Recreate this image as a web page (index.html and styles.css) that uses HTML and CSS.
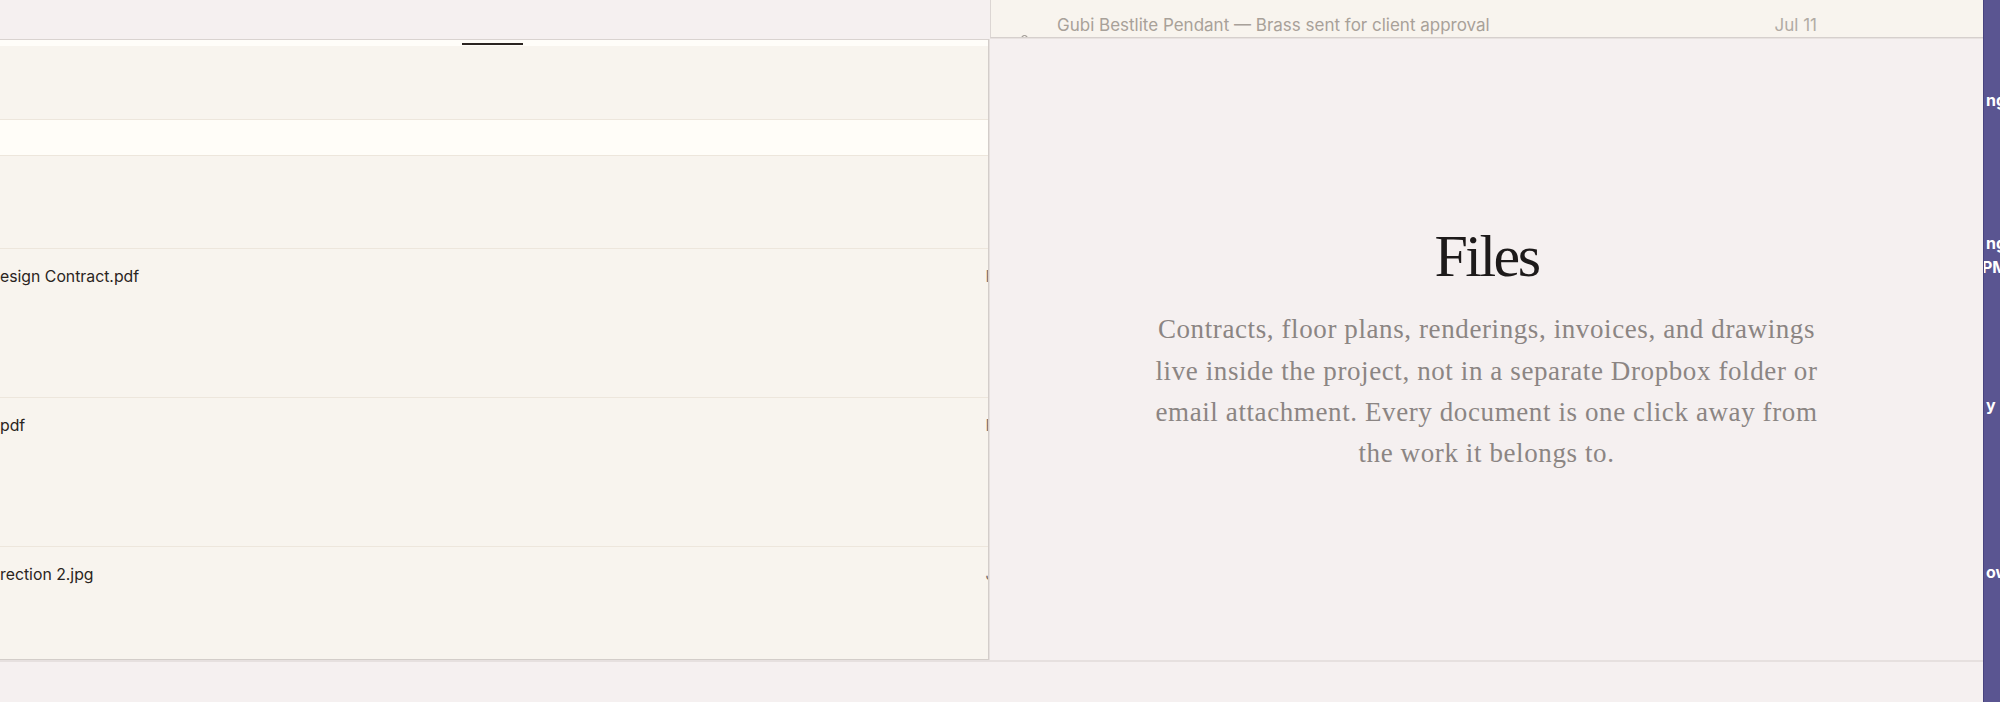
FILE: index.html
```html
<!DOCTYPE html>
<html lang="en">
<head>
<meta charset="utf-8">
<title>Project Files</title>
<link rel="stylesheet" href="styles.css">
</head>
<body>
<div class="screen">
  <main class="workspace">
    <section class="files-col">
      <div class="files-card">
        <div class="tabbar"><span class="tab-indicator"></span></div>
        <div class="toolbar"></div>
        <div class="search-row"></div>
        <div class="list-head"></div>
        <div class="file-row"><span class="file-name">esign Contract.pdf</span><span class="file-type">PDF</span></div>
        <div class="file-row"><span class="file-name">pdf</span><span class="file-type">PDF</span></div>
        <div class="file-row"><span class="file-name">rection 2.jpg</span><span class="file-type">JPG</span></div>
      </div>
    </section>
    <section class="detail-col">
      <div class="activity-card">
        <div class="activity-row">
          <span class="activity-icon"></span>
          <span class="activity-text">Gubi Bestlite Pendant — Brass sent for client approval</span>
          <span class="activity-date">Jul 11</span>
        </div>
      </div>
      <div class="empty-state">
        <h1 class="empty-title">Files</h1>
        <p class="empty-copy">Contracts, floor plans, renderings, invoices, and drawings live inside the project, not in a separate Dropbox folder or email attachment. Every document is one click away from the work it belongs to.</p>
      </div>
    </section>
  </main>
  <aside class="rail">
    <span class="rail-line l1">ngs</span>
    <span class="rail-line l2">ng</span>
    <span class="rail-line l3">PM</span>
    <span class="rail-line l4">y</span>
    <span class="rail-line l5">ow</span>
  </aside>
</div>
</body>
</html>
```
FILE: styles.css
```css
* { box-sizing: border-box; }

html, body {
  margin: 0;
  padding: 0;
}

body {
  width: 2000px;
  height: 702px;
  overflow: hidden;
  background: #f5f0f0;
  font-family: Inter, "Liberation Sans", sans-serif;
}

.screen {
  display: flex;
  height: 702px;
}

.workspace {
  flex: 0 0 1983px;
  height: 662px;
  display: grid;
  grid-template-columns: 990px 1fr;
  border-bottom: 2px solid #e6e0df;
}

/* ---------- left: file list ---------- */
.files-col {
  padding-top: 39px;
  min-height: 0;
}

.files-card {
  width: 989px;
  height: 100%;
  background: #f8f4ee;
  border-top: 1px solid #d9d3d0;
  border-right: 1px solid #d3cdca;
  border-bottom: 1px solid #d3cdc9;
  box-shadow: 1px 0 0 #e6e0de;
  overflow: hidden;
  display: flex;
  flex-direction: column;
}

.tabbar {
  flex: 0 0 6px;
  background: #fffdf9;
  padding-top: 3px;
  display: flex;
}

.tab-indicator {
  margin-left: 462px;
  width: 61px;
  height: 2px;
  background: #2b2421;
}

.toolbar {
  flex: 0 0 74px;
  border-bottom: 1px solid #ede6dc;
}

.search-row {
  flex: 0 0 36px;
  background: #fffdf8;
  border-bottom: 1px solid #ede6dc;
}

.list-head {
  flex: 0 0 93px;
  border-bottom: 1px solid #ede6dc;
}

.file-row {
  flex: 0 0 149px;
  display: flex;
  align-items: flex-start;
  padding-top: 18px;
  border-bottom: 1px solid #ede6dc;
  font-size: 15.8px;
  line-height: 20px;
  color: #2a2421;
}

.file-name {
  flex: 1;
  white-space: nowrap;
}

.file-type {
  width: 80px;
  margin-right: -77.5px;
  color: #7a736e;
  white-space: nowrap;
}

/* ---------- right: detail ---------- */
.detail-col {
  display: flex;
  flex-direction: column;
  min-height: 0;
}

.activity-card {
  flex: 0 0 38px;
  background: #f8f4ee;
  border-left: 1px solid #dcd6d3;
  border-bottom: 1px solid #d6d0cd;
  box-shadow: 0 1px 0 #e8e2e0;
  overflow: hidden;
}

.activity-row {
  display: flex;
  align-items: flex-start;
  margin-top: 15px;
  padding-left: 30px;
  padding-right: 166px;
  font-size: 17px;
  line-height: 20px;
  white-space: nowrap;
}

.activity-icon {
  flex: 0 0 7px;
  height: 7px;
  margin-top: 20px;
  border: 1.5px solid #8d8781;
  border-radius: 50%;
}

.activity-text {
  margin-left: 29px;
  color: #a8a199;
}

.activity-date {
  margin-left: auto;
  color: #b1aba4;
}

.empty-state {
  flex: 1;
  display: flex;
  flex-direction: column;
  align-items: center;
  justify-content: center;
  padding-bottom: 3px;
  text-align: center;
}

.empty-title {
  margin: 0;
  font-family: "Liberation Serif", serif;
  font-weight: 400;
  font-size: 60px;
  line-height: 72px;
  letter-spacing: -2.5px;
  color: #1d1a1a;
}

.empty-copy {
  margin: 17px 0 0;
  width: 672px;
  font-family: "Liberation Serif", serif;
  font-size: 27px;
  letter-spacing: 0.6px;
  line-height: 41.3px;
  color: #8b8583;
}

/* ---------- purple rail ---------- */
.rail {
  flex: 0 0 17px;
  height: 702px;
  background: #5a5591;
  border-left: 1px solid #48437e;
  overflow: hidden;
  display: flex;
  flex-direction: column;
  padding-left: 2px;
  color: #ffffff;
  font-weight: 700;
  font-size: 16px;
  line-height: 20px;
  white-space: nowrap;
}

.rail-line { display: block; height: 20px; }
.l1 { margin-top: 90px; }
.l2 { margin-top: 123px; }
.l3 { margin-top: 4px; margin-left: -4px; }
.l4 { margin-top: 118px; }
.l5 { margin-top: 147px; }
```
